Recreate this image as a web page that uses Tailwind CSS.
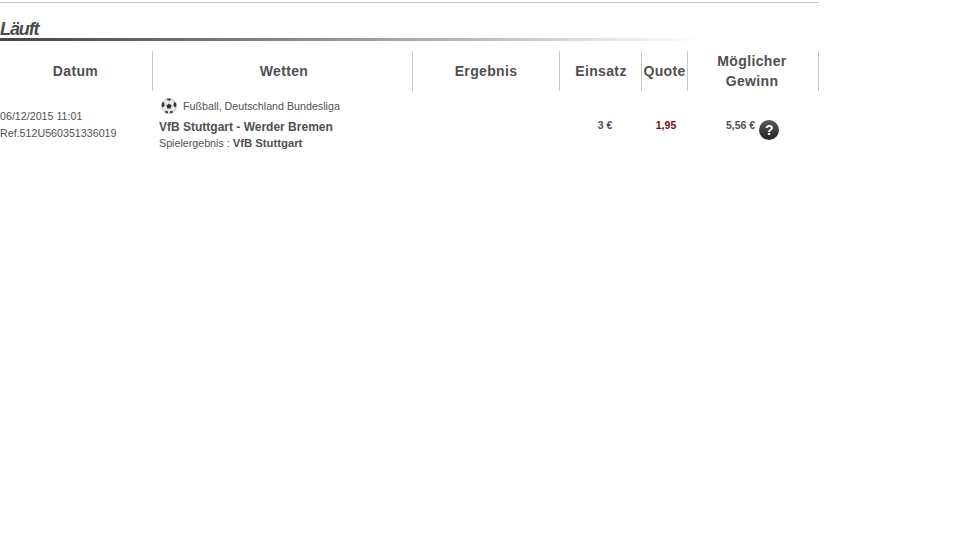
<!DOCTYPE html>
<html lang="de">
<head>
  <meta charset="UTF-8" />
  <title>Läuft</title>
  <script src="https://cdn.jsdelivr.net/npm/@tailwindcss/browser@4"></script>
</head>
<body class="bg-white font-['Liberation_Sans',Arial,sans-serif] text-[#505050]">
  <div class="w-[819px] pt-[2px]">
    <div class="h-px bg-[#c8c8c8]"></div>

    <h2 class="mt-[17px] h-[18px] text-[18px] leading-[19px] font-bold italic tracking-[-1.1px] text-[#4a4a4a]">Läuft</h2>
    <div class="h-[3px] w-[700px] bg-gradient-to-r from-[#444] via-[#999] via-50% to-white"></div>

    <!-- header -->
    <div class="mt-[10px] grid grid-cols-[153px_260px_147px_82px_46px_131px] h-[40px] text-[14px] leading-[20px] font-bold tracking-[0.35px] text-center text-[#505050]">
      <div class="flex items-center justify-center border-r border-[#c8c8c8] pr-[1px]">Datum</div>
      <div class="flex items-center justify-center border-r border-[#c8c8c8] pl-[3px]">Wetten</div>
      <div class="flex items-center justify-center border-r border-[#c8c8c8]">Ergebnis</div>
      <div class="flex items-center justify-center border-r border-[#c8c8c8] pl-[1px]">Einsatz</div>
      <div class="flex items-center justify-center border-r border-[#c8c8c8]">Quote</div>
      <div class="flex items-center justify-center border-r border-[#c8c8c8] pr-[2px]">Möglicher<br />Gewinn</div>
    </div>

    <!-- bet row -->
    <div class="mt-[5px] grid grid-cols-[153px_260px_147px_82px_46px_131px] text-[10.5px]">
      <div class="pt-[12px] text-[10.7px] leading-[17px]">
        <div>06/12/2015 11:01</div>
        <div>Ref.512U560351336019</div>
      </div>
      <div class="pl-[6px]">
        <div class="flex items-center h-[20px] pl-[2px] gap-[6px] text-[10.7px]">
          <svg width="16" height="16" viewBox="0 0 16 16">
            <circle cx="8" cy="8" r="7.5" fill="#e8e8e8" stroke="#aaa" stroke-width="0.6" />
            <path d="M8 5.6 10.6 7.4 9.6 10.4H6.4L5.4 7.4Z" fill="#333" />
            <path d="M6 .8 10 .8 9.4 2.6 6.6 2.6Z M1 5 3 4 3.6 7.4 1.8 9.6 .6 8Z M15 5 13 4 12.4 7.4 14.2 9.6 15.4 8Z M4.6 12.6 7 13.4 6.8 15.4 4.2 14.6Z M11.4 12.6 9 13.4 9.2 15.4 11.8 14.6Z" fill="#333" />
          </svg>
          <span>Fußball, Deutschland Bundesliga</span>
        </div>
        <div class="mt-[4px] text-[12px] leading-[15px] font-bold">VfB Stuttgart - Werder Bremen</div>
        <div class="mt-[1px] text-[10.7px] leading-[14px]">Spielergebnis : <b class="text-[11.3px]">VfB Stuttgart</b></div>
      </div>
      <div></div>
      <div class="pt-[23px] pl-[8px] text-center leading-[12px] font-bold">3 €</div>
      <div class="pt-[23px] pl-[2px] text-center leading-[12px] font-bold text-[#7a0a14]">1,95</div>
      <div class="pt-[23px] pl-[38px] flex items-start gap-[4px] leading-[12px] font-bold">
        <span class="whitespace-nowrap">5,56 €</span>
        <span class="mt-[1px] flex h-[20px] w-[20px] shrink-0 items-center justify-center rounded-full bg-gradient-to-b from-[#5a5a5a] to-[#222] text-[14px] font-bold text-white">?</span>
      </div>
    </div>
  </div>
</body>
</html>
